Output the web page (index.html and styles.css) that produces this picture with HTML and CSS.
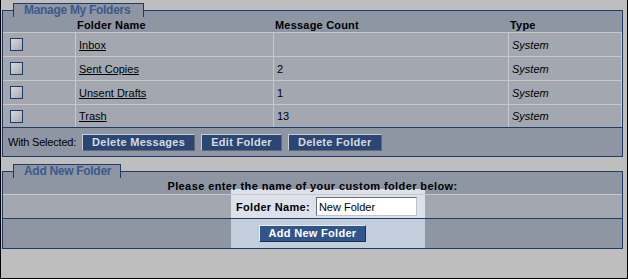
FILE: index.html
```html
<!DOCTYPE html>
<html lang="en">
<head>
    <meta charset="UTF-8">
    <title>Manage My Folders</title>
    <link rel="stylesheet" href="styles.css">
</head>
<body>

<div class="frame">
    <div class="tab">Manage My Folders</div>
    <div class="panel">
        <div class="row head">
            <div class="cell"></div>
            <div class="cell">Folder Name</div>
            <div class="cell">Message Count</div>
            <div class="cell">Type</div>
        </div>
        <div class="row item">
            <div class="cell"><input type="checkbox" class="check"></div>
            <div class="cell"><a href="#">Inbox</a></div>
            <div class="cell"></div>
            <div class="cell kind">System</div>
        </div>
        <div class="row item">
            <div class="cell"><input type="checkbox" class="check"></div>
            <div class="cell"><a href="#">Sent Copies</a></div>
            <div class="cell">2</div>
            <div class="cell kind">System</div>
        </div>
        <div class="row item">
            <div class="cell"><input type="checkbox" class="check"></div>
            <div class="cell"><a href="#">Unsent Drafts</a></div>
            <div class="cell">1</div>
            <div class="cell kind">System</div>
        </div>
        <div class="row item last">
            <div class="cell"><input type="checkbox" class="check"></div>
            <div class="cell"><a href="#">Trash</a></div>
            <div class="cell">13</div>
            <div class="cell kind">System</div>
        </div>
        <div class="actions">
            <span class="selected">With Selected:</span>
            <button class="btn">Delete Messages</button>
            <button class="btn">Edit Folder</button>
            <button class="btn">Delete Folder</button>
        </div>
    </div>

    <div class="tab second">Add New Folder</div>
    <div class="panel">
        <div class="prompt">Please enter the name of your custom folder below:</div>
        <div class="entry">
            <div></div>
            <div class="focus">
                <label for="folderName">Folder Name:</label>
                <input type="text" id="folderName" value="New Folder">
            </div>
            <div></div>
        </div>
        <div class="submit">
            <div></div>
            <div class="focus"><button class="btn add">Add New Folder</button></div>
            <div></div>
        </div>
    </div>
</div>

</body>
</html>
```

FILE: styles.css
```css
body {
    margin: 0;
    font-family: "Liberation Sans", Arial, sans-serif;
    font-size: 11px;
    color: #000;
}
.frame {
    width: 628px;
    height: 279px;
    box-sizing: border-box;
    background: #bebebe;
    border: 1px solid #000;
    border-top: none;
    padding-top: 3px;
}
.tab {
    position: relative;
    z-index: 1;
    width: 131px;
    height: 14px;
    box-sizing: border-box;
    margin-left: 12px;
    padding-left: 10px;
    border: 1px solid #1f3b66;
    border-bottom: none;
    background: #8e96a3;
    color: #3a5a8e;
    font-size: 12px;
    font-weight: bold;
    letter-spacing: -0.3px;
    line-height: 13px;
    white-space: nowrap;
}
.tab.second {
    width: 108px;
    margin-top: 7px;
}
.panel {
    width: 621px;
    box-sizing: border-box;
    margin: -7px 0 0 1px;
    border: 1px solid #1f3b66;
    background: #8e96a3;
}
.row {
    display: grid;
    grid-template-columns: 73px 198px 235px 113px;
    box-sizing: border-box;
    border-bottom: 1px solid #c6c8cc;
}
.head {
    height: 22px;
}
.head .cell {
    padding: 7px 0 0 1px;
    line-height: 14px;
    font-weight: bold;
    letter-spacing: 0.2px;
}
.item {
    height: 24px;
    background: #a3a8b0;
}
.item.last {
    height: 23px;
    border-bottom-color: #1f3b66;
}
.item .cell {
    display: flex;
    align-items: center;
    padding-left: 3px;
    border-right: 1px solid #c6c8cc;
}
.item .cell:first-child {
    padding-left: 7px;
}
.item a {
    color: #000;
}
.kind {
    font-style: italic;
}
.check {
    appearance: none;
    width: 13px;
    height: 13px;
    margin: 0;
    box-sizing: border-box;
    border: 1px solid #1f3b66;
    background: linear-gradient(135deg, #d8d9db, #a6a9ae);
}
.actions {
    display: flex;
    align-items: center;
    gap: 6px;
    height: 28px;
    padding-left: 5px;
}
.selected {
    width: 68px;
    flex-shrink: 0;
    white-space: nowrap;
    letter-spacing: -0.2px;
}
.btn {
    height: 17px;
    margin: 0;
    padding: 0 9px;
    border: 1px solid;
    border-color: #c9ccd2 #5f6878 #5f6878 #c9ccd2;
    background: #2b4673;
    color: #d6dae2;
    font-family: "Liberation Sans", Arial, sans-serif;
    font-size: 11px;
    font-weight: bold;
    letter-spacing: 0.3px;
    line-height: 15px;
}
.prompt {
    height: 23px;
    box-sizing: border-box;
    padding-top: 7px;
    line-height: 14px;
    text-align: center;
    font-weight: bold;
    letter-spacing: 0.4px;
    border-bottom: 1px solid #c6c8cc;
    background: linear-gradient(#dde2ea, #dde2ea) 228px 100% / 194px 5px no-repeat, #8e96a3;
}
.entry,
.submit {
    display: grid;
    grid-template-columns: 228px 194px 1fr;
}
.entry {
    height: 24px;
    box-sizing: border-box;
    background: #a3a8b0;
    border-bottom: 1px solid #1f3b66;
}
.entry .focus {
    display: flex;
    align-items: center;
    gap: 6px;
    padding-left: 5px;
    background: #dde2ea;
}
.entry label {
    font-weight: bold;
    letter-spacing: 0.3px;
}
.entry input {
    width: 101px;
    height: 19px;
    box-sizing: border-box;
    margin: 0;
    padding: 0 2px;
    border: 1px solid;
    border-color: #6b7078 #c0c4ca #c0c4ca #6b7078;
    background: #fff;
    font-family: "Liberation Sans", Arial, sans-serif;
    font-size: 11px;
    color: #000;
}
.submit {
    height: 29px;
}
.submit .focus {
    display: flex;
    align-items: center;
    padding-left: 28px;
    background: #c3cedd;
}
.btn.add {
    width: 107px;
    padding: 0;
    background: #31548a;
    color: #fff;
    border-color: #e8ecf2 #1b3055 #1b3055 #e8ecf2;
}
```
